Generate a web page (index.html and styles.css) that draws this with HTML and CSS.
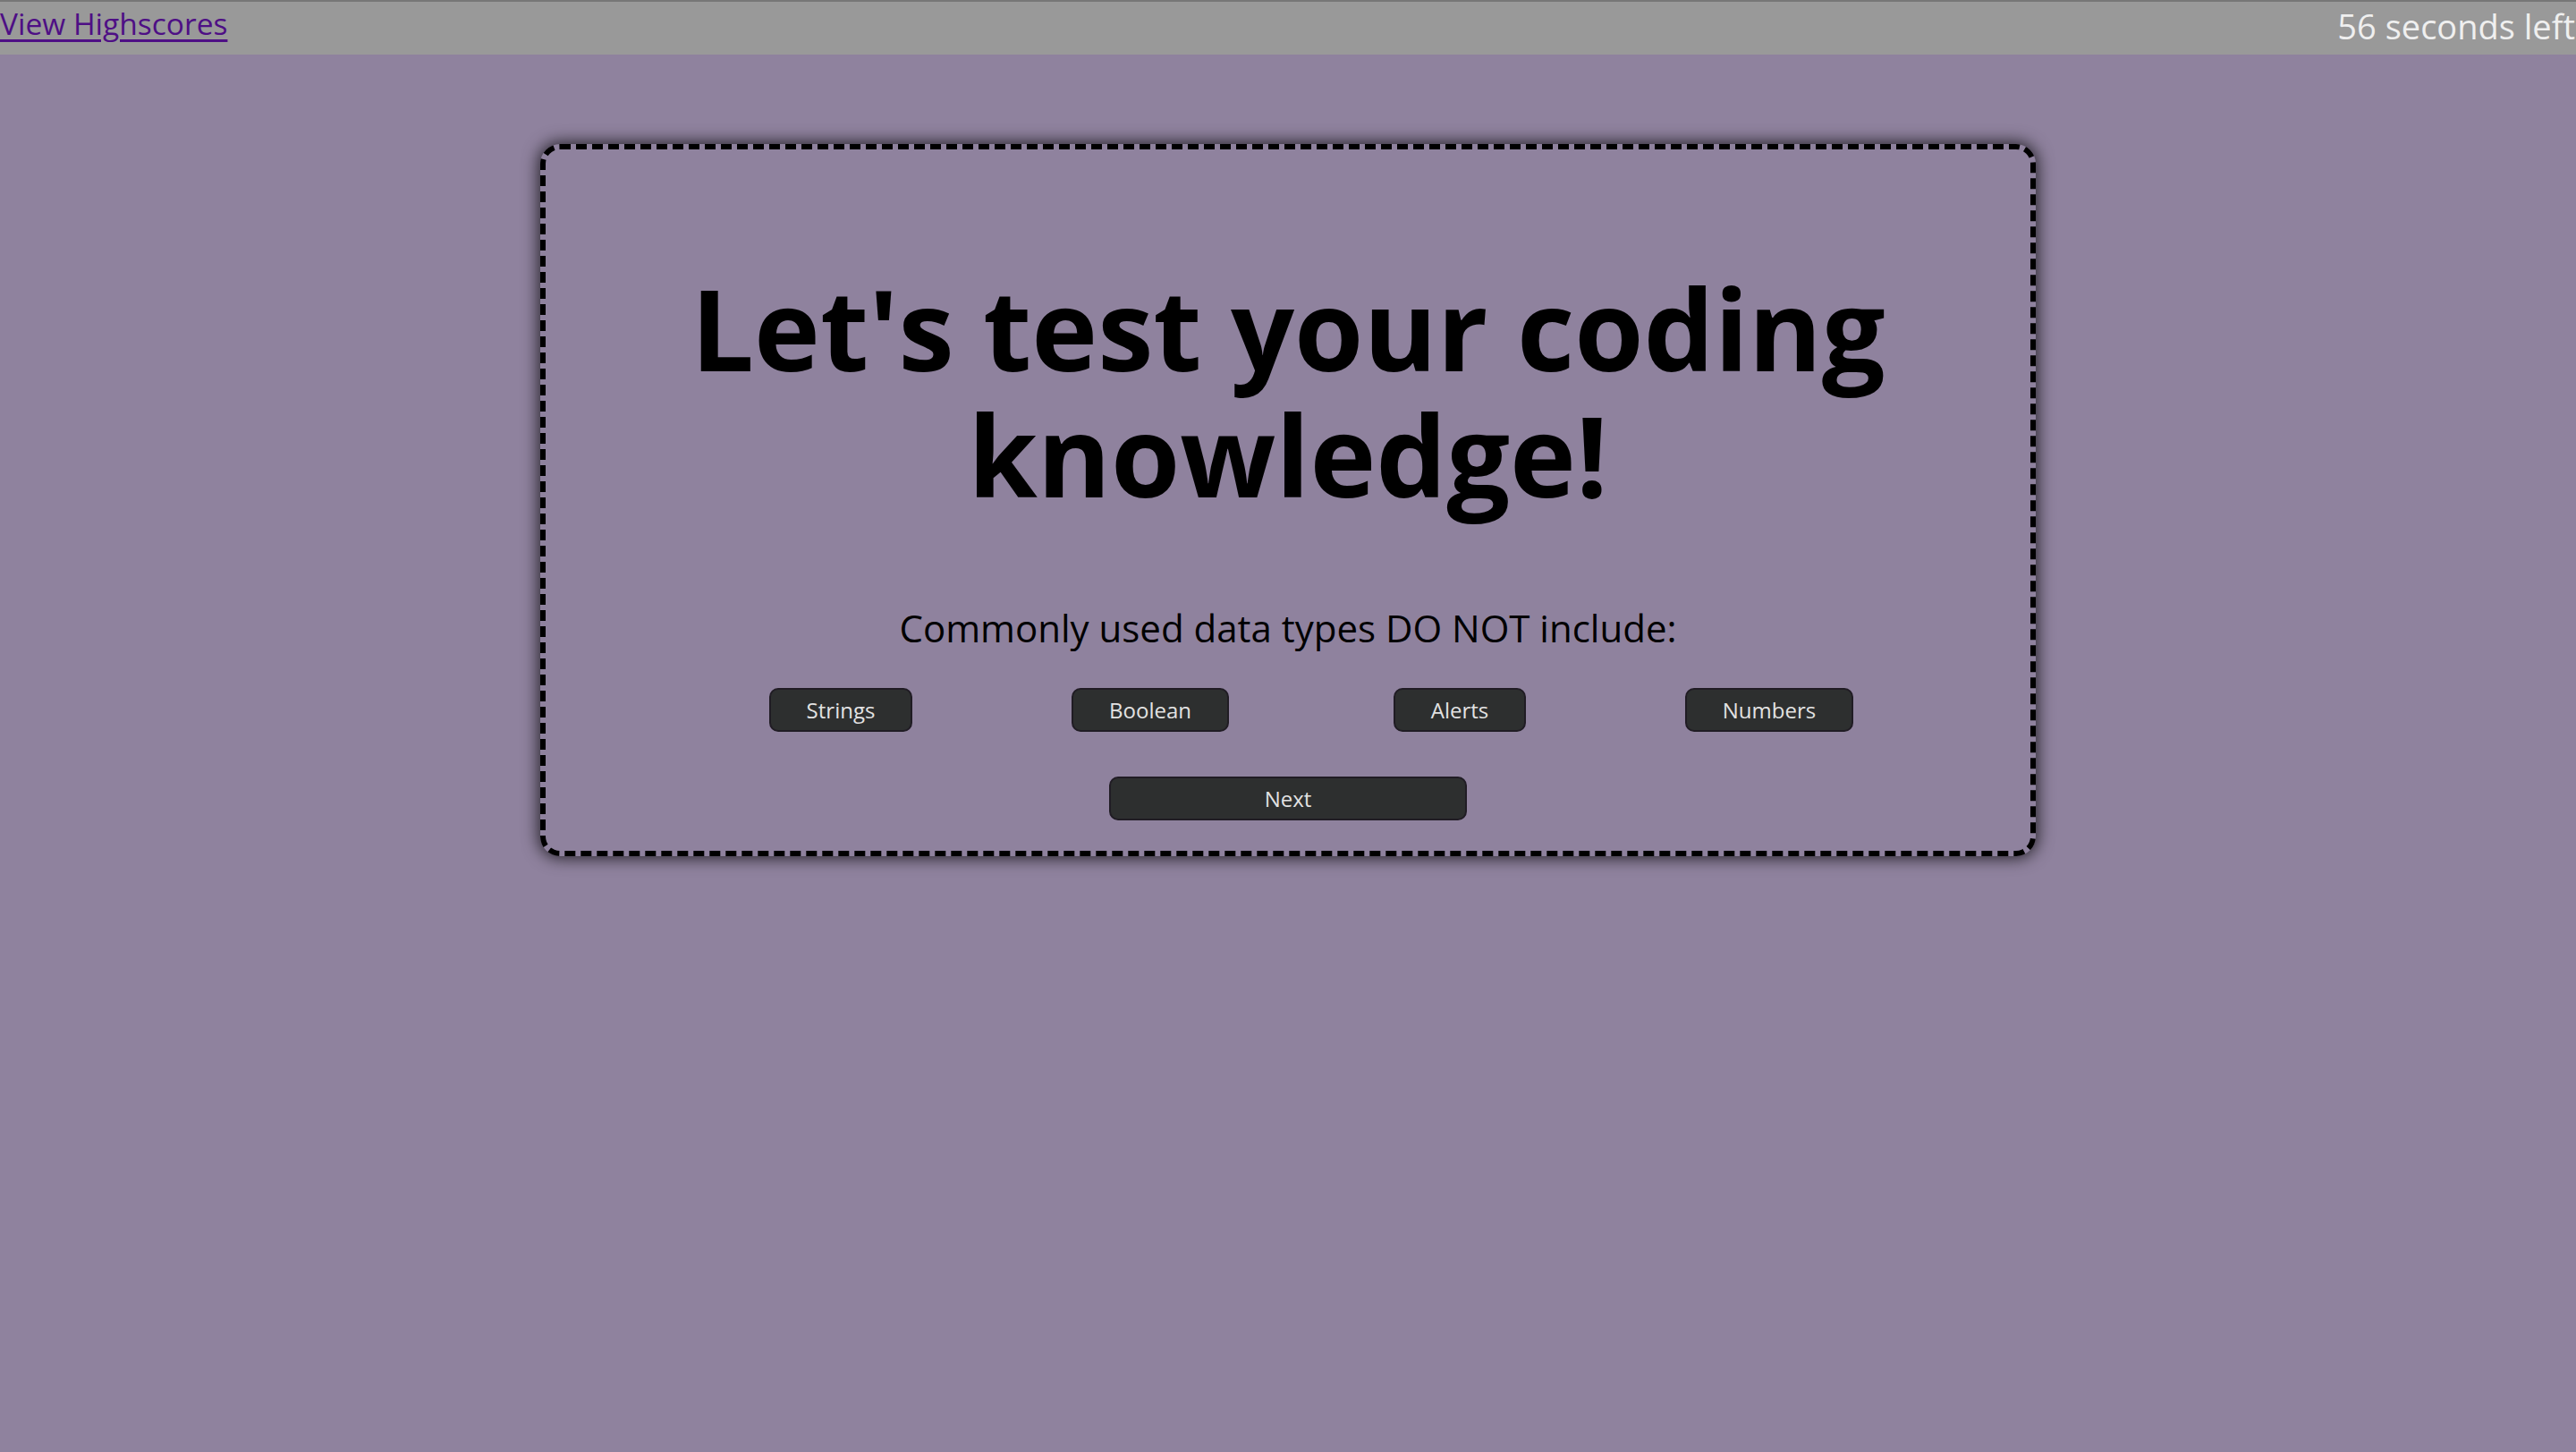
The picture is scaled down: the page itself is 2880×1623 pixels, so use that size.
FILE: index.html
```html
<!DOCTYPE html>
<html lang="en">
<head>
<meta charset="utf-8">
<title>Coding Quiz</title>
<link rel="stylesheet" href="styles.css">
</head>
<body>
<header class="topbar">
  <a class="scores-link" href="#">View Highscores</a>
  <span class="timer">56 seconds left</span>
</header>
<main class="stage">
  <section class="card">
    <h1 class="title">Let's test your coding knowledge!</h1>
    <p class="question">Commonly used data types DO NOT include:</p>
    <div class="answers">
      <button class="btn">Strings</button>
      <button class="btn">Boolean</button>
      <button class="btn">Alerts</button>
      <button class="btn">Numbers</button>
    </div>
    <div class="next-row">
      <button class="btn btn-next">Next</button>
    </div>
  </section>
</main>
</body>
</html>
```

FILE: styles.css
```css
* { box-sizing: border-box; }

html, body {
  margin: 0;
  padding: 0;
}

body {
  background: #8f829e;
  font-family: "Open Sans", "DejaVu Sans", sans-serif;
  min-height: 1623px;
}

.topbar {
  height: 61px;
  background: #999999;
  border-top: 2px solid #777777;
  display: flex;
  justify-content: space-between;
  align-items: flex-start;
}

.scores-link {
  font-size: 33.5px;
  line-height: 48px;
  color: #4e0f85;
  text-decoration: underline;
  text-decoration-thickness: 3px;
  text-underline-offset: 5px;
}

.timer {
  font-size: 38px;
  line-height: 54px;
  color: #efefef;
  padding-right: 1px;
}

.stage {
  display: flex;
  justify-content: center;
  padding-top: 100px;
}

.card {
  width: 1672px;
  border: 6px dashed #000;
  border-radius: 22px;
  box-shadow: 0 0 18px 2px rgba(0, 0, 0, 0.75);
  padding: 129px 0 34px;
  text-align: center;
}

.title {
  margin: 0 auto;
  width: 1400px;
  font-size: 125px;
  line-height: 141px;
  font-weight: 700;
  color: #000;
}

.question {
  margin: 96px 0 0;
  font-size: 42px;
  line-height: 56px;
  color: #000;
}

.answers {
  margin-top: 39px;
  padding: 0 119px 0 157px;
  display: grid;
  grid-template-columns: repeat(4, 1fr);
  justify-items: center;
}

.btn {
  font-family: "Open Sans", "DejaVu Sans", sans-serif;
  font-size: 24px;
  line-height: 29px;
  height: 49px;
  padding: 8px 40px;
  color: #e2e2e2;
  background: #2d2f2f;
  border: 2px solid #201c24;
  border-radius: 10px;
}

.next-row {
  margin-top: 50px;
  display: flex;
  justify-content: center;
}

.btn-next {
  width: 400px;
}
```
